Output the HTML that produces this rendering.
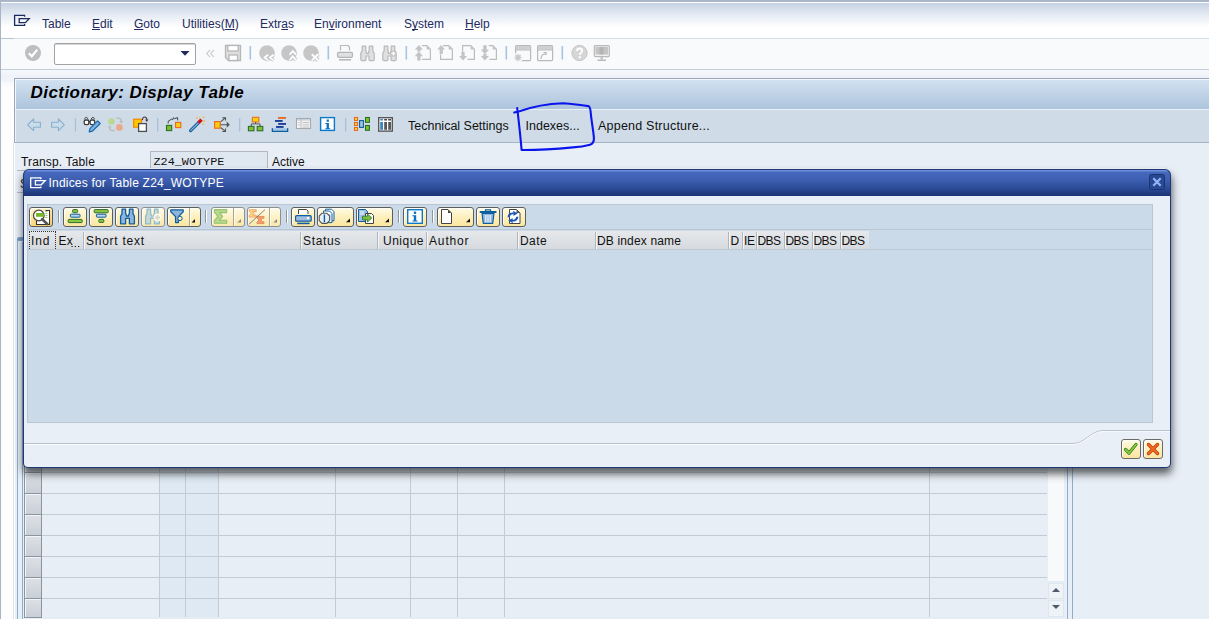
<!DOCTYPE html>
<html><head><meta charset="utf-8">
<style>
*{margin:0;padding:0;box-sizing:border-box}
html,body{width:1209px;height:619px;overflow:hidden;background:#fff;font-family:"Liberation Sans",sans-serif;font-size:12px;color:#000}
.a{position:absolute}
svg{position:absolute;overflow:visible}
u{text-decoration-skip-ink:none}
</style></head><body>
<!-- outer frame -->
<div class="a" style="left:0;top:0;width:1209px;height:619px;background:#ffffff"></div>
<div class="a" style="left:0;top:0;width:1px;height:619px;background:#a9b5c4"></div>
<div class="a" style="left:0;top:0;width:1209px;height:2px;background:#a9b6c8"></div>
<div class="a" style="left:1px;top:2px;width:1208px;height:1px;background:#ffffff"></div>
<!-- menu bar gradient -->
<div class="a" style="left:1px;top:3px;width:1208px;height:35px;background:linear-gradient(#c5d2e3,#e6ecf4 35%,#ffffff 70%,#ffffff)"></div>
<div class="a" style="left:1px;top:38px;width:1208px;height:1px;background:#d5dde7"></div><div class="a" style="left:1px;top:38px;width:13px;height:1px;background:#b4c2d2"></div>

<!-- menu -->
<svg style="left:0;top:0" width="40" height="40"><path d="M24.6 16.8V15.4H14.6V25.4H24.6V24" fill="none" stroke="#1b2a5e" stroke-width="1.3"/><path d="M19.2 18.6H29.2L25.4 22.6H19.2Z" fill="none" stroke="#1b2a5e" stroke-width="1.3"/></svg>
<div class="a" style="left:42px;top:16px;font-size:12px;color:#232a60;line-height:16px">Table</div>
<div class="a" style="left:92px;top:16px;font-size:12px;color:#232a60;line-height:16px"><u>E</u>dit</div>
<div class="a" style="left:134px;top:16px;font-size:12px;color:#232a60;line-height:16px"><u>G</u>oto</div>
<div class="a" style="left:182px;top:16px;font-size:12px;color:#232a60;line-height:16px">Utilities(<u>M</u>)</div>
<div class="a" style="left:260px;top:16px;font-size:12px;color:#232a60;line-height:16px">Extr<u>a</u>s</div>
<div class="a" style="left:314px;top:16px;font-size:12px;color:#232a60;line-height:16px">En<u>v</u>ironment</div>
<div class="a" style="left:404px;top:16px;font-size:12px;color:#232a60;line-height:16px">S<u>y</u>stem</div>
<div class="a" style="left:465px;top:16px;font-size:12px;color:#232a60;line-height:16px"><u>H</u>elp</div>
<!-- system toolbar -->
<div class="a" style="left:1px;top:39px;width:1208px;height:30px;background:#f8fafc"></div>
<div class="a" style="left:1px;top:69px;width:1208px;height:1px;background:#c5cfdb"></div>
<div class="a" style="left:54px;top:43px;width:142px;height:22px;background:#fff;border:1px solid #a2a2a2;border-radius:2px;box-shadow:inset 0 1px 0 #d8d8d8"></div>
<svg style="left:0;top:0" width="1209" height="70">
<g fill="#c4c4c4" stroke="none">
<circle cx="33" cy="53" r="8" fill="#bebebe"/>
</g>
<path d="M28.8 53.2L31.8 56.3L37.3 49.6" fill="none" stroke="#fff" stroke-width="2.2"/>
<path d="M180.5 51H189.5L185 55.8Z" fill="#1d2b5e"/>
<path d="M210 50L206.6 53.5L210 57M214 50L210.6 53.5L214 57" fill="none" stroke="#cdcdcd" stroke-width="1.1"/>
<path d="M225.5 45.5H240.5V60.5H228.5L225.5 57.5Z" fill="#dedede" stroke="#b7b7b7" stroke-width="1.3"/>
<rect x="227.8" y="45.5" width="10.4" height="5.5" fill="#fff" stroke="#b7b7b7" stroke-width="1.3"/>
<rect x="229" y="55" width="8.5" height="5.5" fill="#fff" stroke="#b7b7b7" stroke-width="1.3"/>
<rect x="249.5" y="46" width="1.6" height="13.5" fill="#a9c4e2"/>
<circle cx="267" cy="53" r="7.8" fill="#c6c6c6"/>
<path d="M268.2 54.8L264.6 57.6L268.2 60.4M273.6 54.8L270 57.6L273.6 60.4" fill="none" stroke="#c6c6c6" stroke-width="3.6" stroke-linejoin="miter"/>
<path d="M268.2 54.8L264.6 57.6L268.2 60.4M273.6 54.8L270 57.6L273.6 60.4" fill="none" stroke="#fff" stroke-width="1.8"/>
<circle cx="289" cy="53" r="7.8" fill="#c6c6c6"/>
<path d="M289.6 54.6L292.8 51L296 54.6M289.6 60L292.8 56.4L296 60" fill="none" stroke="#c6c6c6" stroke-width="3.6"/>
<path d="M289.6 54.6L292.8 51L296 54.6M289.6 60L292.8 56.4L296 60" fill="none" stroke="#fff" stroke-width="1.8"/>
<circle cx="311" cy="53" r="7.8" fill="#c6c6c6"/>
<path d="M311.8 54.2L318.2 60.4M318.2 54.2L311.8 60.4" fill="none" stroke="#c6c6c6" stroke-width="4"/>
<path d="M311.8 54.2L318.2 60.4M318.2 54.2L311.8 60.4" fill="none" stroke="#fff" stroke-width="2"/>
<rect x="327.5" y="46" width="1.6" height="13.5" fill="#a9c4e2"/>
<!-- print -->
<path d="M340.5 50.5V45.5H348L349.5 47V50.5" fill="none" stroke="#b9b9b9" stroke-width="1.2"/>
<rect x="337.6" y="52.3" width="14.8" height="5" rx="1" fill="#e0e0e0" stroke="#b5b5b5" stroke-width="1.3"/>
<rect x="339" y="59" width="12" height="1.6" fill="#b9b9b9"/>
<!-- binoculars -->
<path d="M360.8 59.6V53.2L362.2 50.6V46.2H365.8V50.4L366.4 52V53.4H368.6V52L369.2 50.4V46.2H372.8V50.6L374.2 53.2V59.6C374.2 60.2 373.8 60.6 373.2 60.6H370C369.4 60.6 369 60.2 369 59.6V56H366V59.6C366 60.2 365.6 60.6 365 60.6H361.8C361.2 60.6 360.8 60.2 360.8 59.6Z" fill="#e0e0e0" stroke="#b9b9b9" stroke-width="1.2" stroke-linejoin="round"/>
<path d="M382.8 59.6V53.2L384.2 50.6V46.2H387.8V50.4L388.4 52V53.4H390.6V52L391.2 50.4V46.2H394.8V50.6L396.2 53.2V59.6C396.2 60.2 395.8 60.6 395.2 60.6H392C391.4 60.6 391 60.2 391 59.6V56H388V59.6C388 60.2 387.6 60.6 387 60.6H383.8C383.2 60.6 382.8 60.2 382.8 59.6Z" fill="#e0e0e0" stroke="#b9b9b9" stroke-width="1.2" stroke-linejoin="round"/>
<path d="M393.4 50.6V56.4M390.5 53.5H396.3" stroke="#bdbdbd" stroke-width="3.6"/>
<path d="M393.4 51.4V55.6M391.3 53.5H395.5" stroke="#fff" stroke-width="1.6"/>
<rect x="405.5" y="46" width="1.6" height="13.5" fill="#a9c4e2"/>
<!-- page nav -->
<g fill="none" stroke="#bcbcbc" stroke-width="1.2">
<path d="M422 45.6H426.8L430.4 49.2V59.4H422"/>
<path d="M443 45.6H448.8L452.4 49.2V59.4H440.6V54.5"/>
<path d="M462.6 51.5V45.6H470.8L474.4 49.2V59.4H467.5"/>
<path d="M488.8 45.6H492.8L496.4 49.2V59.4H489.5"/>
</g>
<g fill="#c4c4c4">
<path d="M426.6 45.6L430.4 49.4H426.6Z"/><path d="M448.6 45.6L452.4 49.4H448.6Z"/><path d="M470.6 45.6L474.4 49.4H470.6Z"/><path d="M492.6 45.6L496.4 49.4H492.6Z"/>
<path d="M414.8 49.6L418.9 45L423 49.6H420.6V51.6H417.2V49.6Z"/>
<path d="M414.8 56.2L418.9 51.6L423 56.2H420.6V60.6H417.2V56.2Z"/>
<path d="M437.2 49.6L441.1 45L445 49.6H442.8V54H439.6V49.6Z"/>
<path d="M459.1 56L463 60.6L467 56H464.6V51.8H461.4V56Z"/>
<path d="M480.8 49.6L484.9 54.2L489 49.6H486.6V45.2H483.2V49.6Z"/>
<path d="M480.8 56L484.9 60.6L489 56H486.6V54H483.2V56Z"/>
</g>
<rect x="505.5" y="46" width="1.6" height="13.5" fill="#a9c4e2"/>
<!-- new session / shortcut -->
<rect x="515.6" y="45.6" width="15" height="15" rx="1" fill="none" stroke="#b9b9b9" stroke-width="1.2"/>
<rect x="516" y="46" width="14.4" height="3.6" fill="#d0d0d0"/>
<path d="M516 50H530.5" stroke="#b9b9b9" stroke-width="1"/>
<rect x="514" y="53.5" width="8" height="8" fill="#f8fafc"/>
<path d="M518 54V61M514.5 57.5H521.5M515.5 55L520.5 60M520.5 55L515.5 60" stroke="#c8c8c8" stroke-width="1.4"/>
<rect x="537.6" y="45.6" width="15" height="15" rx="1" fill="none" stroke="#b9b9b9" stroke-width="1.2"/>
<rect x="538" y="46" width="14.4" height="3.6" fill="#d0d0d0"/>
<path d="M538 50H552.5" stroke="#b9b9b9" stroke-width="1"/>
<path d="M541 59C541 55.5 542.5 54 545.5 54M543.5 52.5H546V55" fill="none" stroke="#b5b5b5" stroke-width="1.2"/>
<rect x="561.5" y="46" width="1.6" height="13.5" fill="#a9c4e2"/>
<circle cx="579.5" cy="53" r="7.6" fill="#d6d6d6" stroke="#c4c4c4" stroke-width="1"/>
<path d="M577 51C577 49.2 578.2 48.5 579.6 48.5C581.2 48.5 582.2 49.5 582.2 50.8C582.2 52.5 579.8 52.8 579.8 55" fill="none" stroke="#fff" stroke-width="1.8"/>
<rect x="578.8" y="56.2" width="2" height="2" fill="#fff"/>
<rect x="594.3" y="45.6" width="15" height="11" rx="1" fill="#f0f0f0" stroke="#b9b9b9" stroke-width="1.2"/>
<rect x="595.5" y="47" width="12.5" height="7.5" fill="#c4c4c4"/>
<rect x="599.5" y="47" width="4" height="7.5" fill="#b4b4b4"/>
<rect x="600.5" y="57" width="2.5" height="2.5" fill="#c4c4c4"/>
<rect x="597.5" y="59.5" width="8.5" height="1.5" fill="#b9b9b9"/>
</svg>

<div class="a" style="left:1px;top:70px;width:1208px;height:8px;background:linear-gradient(#f4f7fb,#eef2f8)"></div>

<!-- main panel -->
<div class="a" style="left:14px;top:78px;width:1195px;height:1px;background:#98a8bc"></div>
<div class="a" style="left:14px;top:78px;width:1px;height:65px;background:#98a8bc"></div><div class="a" style="left:13px;top:143px;width:1px;height:476px;background:#dce1e8"></div>
<div class="a" style="left:15px;top:79px;width:1194px;height:30px;border-top:1px solid #f4f8fc;border-left:1px solid #f4f8fc;background:linear-gradient(#d2e1f0,#adc4dd)"></div>
<div class="a" style="left:15px;top:109px;width:1194px;height:1px;background:#e8eff7"></div>
<div class="a" style="left:15px;top:110px;width:1194px;height:32px;border-left:1px solid #eef3f8;background:#cfdce8"></div>
<div class="a" style="left:15px;top:142px;width:1194px;height:1px;background:#a5b4c4"></div>
<div class="a" style="left:15px;top:143px;width:1194px;height:476px;background:#e8eef6"></div>
<div class="a" style="left:1px;top:82px;width:12px;height:537px;background:linear-gradient(#f6f8fb,#fdfdfe 6px)"></div><div class="a" style="left:1px;top:78px;width:13px;height:4px;background:#f0f3f8"></div>


<div class="a" style="left:30.5px;top:83px;font-size:17px;font-weight:bold;font-style:italic;letter-spacing:0.45px;line-height:20px;color:#000">Dictionary: Display Table</div>
<svg style="left:0;top:0" width="400" height="140">
<!-- back/forward -->
<path d="M27.6 124.8L33.6 119V122.3H40.4V127.3H33.6V130.6Z" fill="#c9dcea" stroke="#88b0cc" stroke-width="1.1" stroke-linejoin="round"/>
<path d="M64.4 124.8L58.4 119V122.3H51.6V127.3H58.4V130.6Z" fill="#c9dcea" stroke="#88b0cc" stroke-width="1.1" stroke-linejoin="round"/>
<rect x="74.8" y="118" width="1.3" height="13.5" fill="#a9c0d8"/>
<!-- glasses pencil -->
<rect x="84.2" y="120" width="4.6" height="4.6" rx="1.6" fill="#fff" stroke="#3a3a3a" stroke-width="1.3"/>
<rect x="90.1" y="120" width="4.6" height="4.6" rx="1.6" fill="#fff" stroke="#3a3a3a" stroke-width="1.3"/>
<path d="M88.8 121.6H90.1M84.2 119L86.3 117.2L88.3 119M91 119L92.9 117.2L94.8 119" fill="none" stroke="#3a3a3a" stroke-width="1"/>
<path d="M89.2 131.8L89.9 128.6L97.6 120.9L100.2 123.5L92.5 131.2Z" fill="#7fb0e0" stroke="#1a6aa8" stroke-width="1.2" stroke-linejoin="round"/>
<!-- circles -->
<circle cx="111.4" cy="121.5" r="3.3" fill="#b9d98e"/>
<circle cx="119.4" cy="127.4" r="3.4" fill="#eaa98a"/>
<path d="M116.2 118.3H118.3C120 118.3 121.2 119.5 121.2 121.3" fill="none" stroke="#bdbdbd" stroke-width="1.5"/>
<path d="M119.3 121.2L121.2 123.4L123.1 121.2Z" fill="#b5b5b5"/>
<path d="M114.8 130.5H112.6C110.9 130.5 109.7 129.3 109.7 127.5" fill="none" stroke="#bdbdbd" stroke-width="1.5"/>
<path d="M107.8 127.6L109.7 125.4L111.6 127.6Z" fill="#b5b5b5"/>
<!-- copy -->
<rect x="133.6" y="119.2" width="7.8" height="8" fill="#ffc400" stroke="#f28a00" stroke-width="1.2"/>
<rect x="138.6" y="123.6" width="7.8" height="7.8" fill="#fff" stroke="#4e4e4e" stroke-width="1.3"/>
<path d="M142.6 120.2C142.2 118.6 143.2 117 144.6 117C146 117 147 118.2 146.8 119.8" fill="none" stroke="#3c3c3c" stroke-width="1.1"/>
<path d="M145 119.6L146.8 122L148.4 119.6Z" fill="#3c3c3c"/>
<rect x="157" y="118" width="1.3" height="13.5" fill="#a9c0d8"/>
<!-- hierarchy -->
<rect x="166.5" y="125.4" width="5.2" height="5.2" fill="#7cba2c" stroke="#2e6e32" stroke-width="1.1"/>
<rect x="175.6" y="122.4" width="5.2" height="5.2" fill="#ffcc10" stroke="#e8681e" stroke-width="1.1"/>
<path d="M168.2 123.4V121.2L171.5 119.2L172.8 119.6L173.4 117.7L174.6 118.6L177.6 117.6V120.4" fill="none" stroke="#444" stroke-width="1"/>
<!-- wand -->
<path d="M190.6 130.6L198.6 122.6" stroke="#0b5f9a" stroke-width="3.2" stroke-linecap="round"/>
<path d="M190.8 130.4L198.4 122.8" stroke="#8fb8dc" stroke-width="1.2" stroke-linecap="round"/>
<path d="M198.4 122.8L201.6 119.6" stroke="#d0141e" stroke-width="3.4" stroke-linecap="butt"/>
<path d="M196 118H197.8M199.5 117.3V118.2M202.8 117.8L204.3 116.7M203.3 121.1H205M203 123.5V125" stroke="#f6b20c" stroke-width="1.1"/>
<!-- where used -->
<rect x="214.6" y="121.6" width="5.6" height="6.6" fill="#ffcc10" stroke="#e8701e" stroke-width="1.2"/>
<path d="M220.4 124.7H228.5M221 121.6L225.4 117.6M221 127.8L225.4 131.4M222.3 117.7H225.5V120.6M222.3 131.5H225.5V128.6" fill="none" stroke="#555" stroke-width="1.1"/>
<path d="M226.7 121.6L229.8 124.7L226.7 127.8Z" fill="#555"/>
<rect x="239" y="118" width="1.3" height="13.5" fill="#a9c0d8"/>
<!-- org chart -->
<rect x="252.4" y="117.3" width="6.4" height="4.6" fill="#ffd20a" stroke="#e8701e" stroke-width="1.1"/>
<path d="M255.6 122V123.7M251.3 126V123.9H260V126" fill="none" stroke="#555" stroke-width="1"/>
<rect x="248.4" y="126.4" width="5.6" height="4.4" fill="#80c030" stroke="#2e6e32" stroke-width="1.1"/>
<rect x="257.2" y="126.4" width="5.6" height="4.4" fill="#80c030" stroke="#2e6e32" stroke-width="1.1"/>
<!-- stack -->
<rect x="278" y="117" width="8" height="1.8" fill="#e8661e"/>
<rect x="275" y="120" width="7.6" height="1.9" fill="#1c3f9a"/>
<rect x="278.2" y="123" width="7.8" height="1.9" fill="#1c3f9a"/>
<rect x="276" y="126" width="7.6" height="1.9" fill="#1c3f9a"/>
<path d="M272.4 128.3V131.2H287.6V128.3" fill="none" stroke="#0d5e9c" stroke-width="1.4"/>
<rect x="273.1" y="128.3" width="13.8" height="2.1" fill="#9ec4e8"/>
<!-- table disabled -->
<rect x="296.5" y="118.5" width="14" height="10" fill="#f4f4f4" stroke="#a8a8a8" stroke-width="1.1"/>
<rect x="297" y="119" width="13" height="1.6" fill="#c4d4e4"/>
<path d="M301 119V128.5M298.3 122.5H299.8M298.3 124.8H299.8M302.6 122.5H309M302.6 124.8H309M302.6 127H309" stroke="#b8b8b8" stroke-width="0.9"/>
<!-- info -->
<rect x="320.6" y="117.6" width="13.8" height="12.8" fill="#fff" stroke="#0a7ac8" stroke-width="1.4"/>
<rect x="326.6" y="119.5" width="2.3" height="2.2" fill="#0a72c0"/>
<path d="M325.3 123H328.9V128.2H330.2V129.2H325.3V128.2H326.6V124H325.3Z" fill="#0a72c0"/>
<rect x="345" y="118" width="1.3" height="13.5" fill="#a9c0d8"/>
<!-- org blocks -->
<g fill="#ffe53a" stroke="#e8661e" stroke-width="1.1">
<rect x="354.5" y="117.5" width="3" height="2.9"/><rect x="354.5" y="122.5" width="3" height="2.9"/><rect x="354.5" y="127.5" width="3" height="2.9"/>
</g>
<rect x="359.6" y="120.6" width="3.8" height="6.8" fill="#a9c4e4" stroke="#0c5e9a" stroke-width="1.1"/>
<rect x="365.5" y="117.5" width="3.9" height="4.8" fill="#80c424" stroke="#2c6e30" stroke-width="1.1"/>
<rect x="365.5" y="125.5" width="3.9" height="4.8" fill="#80c424" stroke="#2c6e30" stroke-width="1.1"/>
<!-- columns -->
<rect x="378.7" y="117.7" width="13.6" height="13.4" fill="#fff" stroke="#575757" stroke-width="1.4"/>
<rect x="380.2" y="119" width="2.8" height="1.5" fill="#3c86bc"/><rect x="384.2" y="119" width="2.8" height="1.5" fill="#444"/><rect x="388.2" y="119" width="2.8" height="1.5" fill="#444"/>
<rect x="380.2" y="122" width="2.8" height="7.8" fill="#3c86bc"/><rect x="384.2" y="122" width="2.8" height="7.8" fill="#585858"/><rect x="388.2" y="122" width="2.8" height="7.8" fill="#585858"/>
</svg>
<div class="a" style="left:408px;top:118px;font-size:12.5px;line-height:16px;color:#111">Technical Settings</div>
<div class="a" style="left:525.5px;top:118px;font-size:12.5px;line-height:16px;color:#111">Indexes...</div>
<div class="a" style="left:598px;top:118px;letter-spacing:0.22px;font-size:12.5px;line-height:16px;color:#111">Append Structure...</div>

<!-- main content behind modal -->
<div class="a" style="left:21px;top:154px;letter-spacing:0.15px;font-size:12px;line-height:16px;color:#111">Transp. Table</div>
<div class="a" style="left:150px;top:151px;width:118px;height:22px;background:#dfe8f1;border:1px solid #b4b9c0;border-bottom:none"></div>
<div class="a" style="left:153.5px;top:153.5px;font-family:'Liberation Mono',monospace;font-size:11.8px;line-height:16px;color:#111">Z24_WOTYPE</div>
<div class="a" style="left:272px;top:154px;font-size:12px;line-height:16px;color:#111">Active</div>
<div class="a" style="left:17px;top:170px;width:8px;height:1px;background:#b5b9be"></div>
<div class="a" style="left:17px;top:192px;width:8px;height:1px;background:#b5b9be"></div>
<div class="a" style="left:20px;top:176px;font-size:12px;line-height:16px;color:#111">S</div>
<!-- table container -->
<div class="a" style="left:17px;top:237px;width:1056px;height:382px;border:1px solid #8fadca;border-bottom:none;border-radius:3px 3px 0 0;background:#e6eef7"></div>
<div class="a" style="left:22px;top:242px;width:1046px;height:377px;border-left:1px solid #8fadca;border-right:1px solid #8fadca;background:#e9eff6"></div>
<div class="a" style="left:17px;top:237px;width:1056px;height:4px;border-radius:3px 3px 0 0;background:linear-gradient(#7fa3cb,#6f96c3 60%,#86a9cf)"></div>
<!-- grid -->
<div class="a" style="left:24px;top:440px;width:1023px;height:177px;background:#e8eef5"></div>
<div class="a" style="left:160px;top:440px;width:58px;height:177px;background:#dee9f3"></div>
<div class="a" style="left:159px;top:440px;width:1px;height:177px;background:#c3cbd5"></div>
<div class="a" style="left:185px;top:440px;width:1px;height:177px;background:#c3cbd5"></div>
<div class="a" style="left:218px;top:440px;width:1px;height:177px;background:#c3cbd5"></div>
<div class="a" style="left:335px;top:440px;width:1px;height:177px;background:#c3cbd5"></div>
<div class="a" style="left:410px;top:440px;width:1px;height:177px;background:#c3cbd5"></div>
<div class="a" style="left:457px;top:440px;width:1px;height:177px;background:#c3cbd5"></div>
<div class="a" style="left:504px;top:440px;width:1px;height:177px;background:#c3cbd5"></div>
<div class="a" style="left:929px;top:440px;width:1px;height:177px;background:#c3cbd5"></div>
<div class="a" style="left:42px;top:451px;width:1005px;height:1px;background:#c3cbd5"></div>
<div class="a" style="left:42px;top:472px;width:1005px;height:1px;background:#c3cbd5"></div>
<div class="a" style="left:42px;top:493px;width:1005px;height:1px;background:#c3cbd5"></div>
<div class="a" style="left:42px;top:514px;width:1005px;height:1px;background:#c3cbd5"></div>
<div class="a" style="left:42px;top:535px;width:1005px;height:1px;background:#c3cbd5"></div>
<div class="a" style="left:42px;top:556px;width:1005px;height:1px;background:#c3cbd5"></div>
<div class="a" style="left:42px;top:577px;width:1005px;height:1px;background:#c3cbd5"></div>
<div class="a" style="left:42px;top:598px;width:1005px;height:1px;background:#c3cbd5"></div>
<div class="a" style="left:24px;top:409px;width:18px;height:22px;border:1px solid #8b95a1;background:linear-gradient(#dde1e6,#c9cfd7);box-shadow:inset 1px 1px 0 #f2f4f6"></div>
<div class="a" style="left:24px;top:430px;width:18px;height:22px;border:1px solid #8b95a1;background:linear-gradient(#dde1e6,#c9cfd7);box-shadow:inset 1px 1px 0 #f2f4f6"></div>
<div class="a" style="left:24px;top:451px;width:18px;height:22px;border:1px solid #8b95a1;background:linear-gradient(#dde1e6,#c9cfd7);box-shadow:inset 1px 1px 0 #f2f4f6"></div>
<div class="a" style="left:24px;top:472px;width:18px;height:22px;border:1px solid #8b95a1;background:linear-gradient(#dde1e6,#c9cfd7);box-shadow:inset 1px 1px 0 #f2f4f6"></div>
<div class="a" style="left:24px;top:493px;width:18px;height:22px;border:1px solid #8b95a1;background:linear-gradient(#dde1e6,#c9cfd7);box-shadow:inset 1px 1px 0 #f2f4f6"></div>
<div class="a" style="left:24px;top:514px;width:18px;height:22px;border:1px solid #8b95a1;background:linear-gradient(#dde1e6,#c9cfd7);box-shadow:inset 1px 1px 0 #f2f4f6"></div>
<div class="a" style="left:24px;top:535px;width:18px;height:22px;border:1px solid #8b95a1;background:linear-gradient(#dde1e6,#c9cfd7);box-shadow:inset 1px 1px 0 #f2f4f6"></div>
<div class="a" style="left:24px;top:556px;width:18px;height:22px;border:1px solid #8b95a1;background:linear-gradient(#dde1e6,#c9cfd7);box-shadow:inset 1px 1px 0 #f2f4f6"></div>
<div class="a" style="left:24px;top:577px;width:18px;height:22px;border:1px solid #8b95a1;background:linear-gradient(#dde1e6,#c9cfd7);box-shadow:inset 1px 1px 0 #f2f4f6"></div>
<div class="a" style="left:24px;top:598px;width:18px;height:20px;border:1px solid #8b95a1;background:linear-gradient(#dde1e6,#c9cfd7);box-shadow:inset 1px 1px 0 #f2f4f6"></div>
<div class="a" style="left:42px;top:617px;width:1005px;height:2px;background:#e4ebf2"></div>
<div class="a" style="left:1047px;top:440px;width:18px;height:179px;background:#e6edf5"></div>
<div class="a" style="left:1048px;top:440px;width:16px;height:141px;background:#f7f9fb"></div>
<div class="a" style="left:1048px;top:583px;width:16px;height:16px;background:#eef3f8;border:1px solid #dfe6ee"></div>
<div class="a" style="left:1048px;top:600px;width:16px;height:17px;background:#eef3f8;border:1px solid #dfe6ee"></div>
<svg style="left:0;top:0" width="1100" height="619"><path d="M1052 592H1060L1056 588Z" fill="#4c5a6a"/><path d="M1052 605H1060L1056 609Z" fill="#4c5a6a"/></svg>

<!-- modal -->
<div class="a" style="left:29px;top:168px;width:1136px;height:1px;background:#f6f9fc"></div>
<div class="a" style="left:23px;top:169px;width:1148px;height:299px;border-radius:6px 6px 5px 5px;box-shadow:1px 6px 8px 0px rgba(35,38,42,0.62),-1px 4px 6px 0px rgba(35,38,42,0.25);background:#1e3875"></div>
<div class="a" style="left:24px;top:170px;width:1146px;height:26px;border-radius:5px 5px 0 0;background:linear-gradient(#6e8edc,#6e8edc 1px,#4668bd 2px,#3f60b2 35%,#2c4c98 70%,#1a3374)"></div>
<div class="a" style="left:24px;top:196px;width:1146px;height:271px;border-radius:0 0 4px 4px;background:#e9eff6"></div>
<svg style="left:0;top:0" width="1209" height="619">
<path d="M40.8 179.2V177.9H30.7V187.7H40.8V186.4" fill="none" stroke="#fff" stroke-width="1.3"/>
<path d="M35.4 180.6H45.2L41.2 184.8H35.4Z" fill="none" stroke="#fff" stroke-width="1.3"/>
<rect x="1149.5" y="174.5" width="15" height="15" rx="2" fill="#2a4891" stroke="#1a3372" stroke-width="1"/>
<path d="M1153.3 178.3L1160.7 185.7M1160.7 178.3L1153.3 185.7" stroke="#94b4f8" stroke-width="2.2"/>
</svg>
<div class="a" style="left:48.5px;top:175px;font-size:12px;letter-spacing:0.2px;line-height:16px;color:#fff">Indices for Table Z24_WOTYPE</div>
<!-- modal content area -->
<div class="a" style="left:27px;top:204px;width:1126px;height:219px;background:#cbdae8;border:1px solid #bcc6d2"></div>
<div class="a" style="left:28px;top:229px;width:1124px;height:1px;background:#bcc6d2"></div>
<!-- modal toolbar -->
<div class="a" style="left:29px;top:207px;width:24px;height:20px;border:1px solid #5a5a5a;border-radius:3px;background:linear-gradient(165deg,#fff8dc 0%,#fde49a 40%,#f9cf62 100%);box-shadow:inset 1px 1px 0 rgba(255,255,255,0.8)"></div>
<div class="a" style="left:63px;top:207px;width:24px;height:20px;border:1px solid #5e5e5e;border-radius:3px;background:linear-gradient(#fffbe4,#fdf0bc 50%,#fbe6a0);box-shadow:inset 1px 1px 0 rgba(255,255,255,0.8)"></div>
<div class="a" style="left:89px;top:207px;width:24px;height:20px;border:1px solid #5e5e5e;border-radius:3px;background:linear-gradient(#fffbe4,#fdf0bc 50%,#fbe6a0);box-shadow:inset 1px 1px 0 rgba(255,255,255,0.8)"></div>
<div class="a" style="left:115px;top:207px;width:24px;height:20px;border:1px solid #5e5e5e;border-radius:3px;background:linear-gradient(#fffbe4,#fdf0bc 50%,#fbe6a0);box-shadow:inset 1px 1px 0 rgba(255,255,255,0.8)"></div>
<div class="a" style="left:141px;top:207px;width:24px;height:20px;border:1px solid #8f8f8f;border-radius:3px;background:linear-gradient(#fffbe8,#fcefc0 60%,#fae8ac);box-shadow:inset 1px 1px 0 rgba(255,255,255,0.8)"></div>
<div class="a" style="left:167px;top:207px;width:34px;height:20px;border:1px solid #5e5e5e;border-radius:3px;background:linear-gradient(#fffbe4,#fdf0bc 50%,#fbe6a0);box-shadow:inset 1px 1px 0 rgba(255,255,255,0.8)"></div>
<div class="a" style="left:189px;top:208px;width:1px;height:18px;background:#a8a59a"></div><div class="a" style="left:190px;top:208px;width:1px;height:18px;background:#fffbe8"></div>
<div class="a" style="left:211px;top:207px;width:34px;height:20px;border:1px solid #8f8f8f;border-radius:3px;background:linear-gradient(#fffbe8,#fcefc0 60%,#fae8ac);box-shadow:inset 1px 1px 0 rgba(255,255,255,0.8)"></div>
<div class="a" style="left:233px;top:208px;width:1px;height:18px;background:#a8a59a"></div><div class="a" style="left:234px;top:208px;width:1px;height:18px;background:#fffbe8"></div>
<div class="a" style="left:247px;top:207px;width:34px;height:20px;border:1px solid #8f8f8f;border-radius:3px;background:linear-gradient(#fffbe8,#fcefc0 60%,#fae8ac);box-shadow:inset 1px 1px 0 rgba(255,255,255,0.8)"></div>
<div class="a" style="left:269px;top:208px;width:1px;height:18px;background:#a8a59a"></div><div class="a" style="left:270px;top:208px;width:1px;height:18px;background:#fffbe8"></div>
<div class="a" style="left:291px;top:207px;width:24px;height:20px;border:1px solid #5e5e5e;border-radius:3px;background:linear-gradient(#fffbe4,#fdf0bc 50%,#fbe6a0);box-shadow:inset 1px 1px 0 rgba(255,255,255,0.8)"></div>
<div class="a" style="left:317px;top:207px;width:37px;height:20px;border:1px solid #5e5e5e;border-radius:3px;background:linear-gradient(#fffbe4,#fdf0bc 50%,#fbe6a0);box-shadow:inset 1px 1px 0 rgba(255,255,255,0.8)"></div>
<div class="a" style="left:356px;top:207px;width:37px;height:20px;border:1px solid #5e5e5e;border-radius:3px;background:linear-gradient(#fffbe4,#fdf0bc 50%,#fbe6a0);box-shadow:inset 1px 1px 0 rgba(255,255,255,0.8)"></div>
<div class="a" style="left:403px;top:207px;width:24px;height:20px;border:1px solid #5e5e5e;border-radius:3px;background:linear-gradient(#fffbe4,#fdf0bc 50%,#fbe6a0);box-shadow:inset 1px 1px 0 rgba(255,255,255,0.8)"></div>
<div class="a" style="left:437px;top:207px;width:37px;height:20px;border:1px solid #5e5e5e;border-radius:3px;background:linear-gradient(#fffbe4,#fdf0bc 50%,#fbe6a0);box-shadow:inset 1px 1px 0 rgba(255,255,255,0.8)"></div>
<div class="a" style="left:476px;top:207px;width:24px;height:20px;border:1px solid #5e5e5e;border-radius:3px;background:linear-gradient(#fffbe4,#fdf0bc 50%,#fbe6a0);box-shadow:inset 1px 1px 0 rgba(255,255,255,0.8)"></div>
<div class="a" style="left:502px;top:207px;width:24px;height:20px;border:1px solid #5e5e5e;border-radius:3px;background:linear-gradient(#fffbe4,#fdf0bc 50%,#fbe6a0);box-shadow:inset 1px 1px 0 rgba(255,255,255,0.8)"></div>
<div class="a" style="left:58px;top:210px;width:1px;height:13px;background:#8e949a"></div><div class="a" style="left:59px;top:210px;width:1px;height:13px;background:#fff"></div>
<div class="a" style="left:205px;top:210px;width:1px;height:13px;background:#8e949a"></div><div class="a" style="left:206px;top:210px;width:1px;height:13px;background:#fff"></div>
<div class="a" style="left:286px;top:210px;width:1px;height:13px;background:#8e949a"></div><div class="a" style="left:287px;top:210px;width:1px;height:13px;background:#fff"></div>
<div class="a" style="left:398px;top:210px;width:1px;height:13px;background:#8e949a"></div><div class="a" style="left:399px;top:210px;width:1px;height:13px;background:#fff"></div>
<div class="a" style="left:432px;top:210px;width:1px;height:13px;background:#8e949a"></div><div class="a" style="left:433px;top:210px;width:1px;height:13px;background:#fff"></div>

<svg style="left:0;top:0" width="600" height="240">
<!-- 1 search -->
<path d="M45.5 210.5H49.5V224.5H36.5V220.5" fill="#fff" stroke="#333" stroke-width="1.1"/>
<rect x="41" y="211" width="8" height="11" fill="#fff"/>
<circle cx="38.8" cy="215.5" r="5.3" fill="#fff" stroke="#444" stroke-width="1.2"/>
<rect x="36" y="213" width="7.6" height="3.8" fill="#76b82a"/>
<path d="M45.4 211.5H47.4M45.4 213.5H47.4M45.4 215.5H47.4M45.4 217.5H47.4" stroke="#80c040" stroke-width="0.9"/>
<path d="M42.2 219.2L47.2 224" stroke="#555" stroke-width="2.6" stroke-linecap="round"/>
<!-- 2 sort asc -->
<rect x="72.6" y="209.6" width="5" height="3" rx="0.8" fill="#8cc83c" stroke="#2e6e32" stroke-width="1"/>
<rect x="70.4" y="214.2" width="9.6" height="3" rx="0.8" fill="#bcd4ee" stroke="#0a5d9c" stroke-width="1"/>
<rect x="68.2" y="219.4" width="14" height="3.2" rx="0.8" fill="#8cc83c" stroke="#2e6e32" stroke-width="1"/>
<!-- 3 sort desc -->
<rect x="94.2" y="209.6" width="14" height="3.2" rx="0.8" fill="#8cc83c" stroke="#2e6e32" stroke-width="1"/>
<rect x="96.4" y="214.2" width="9.6" height="3" rx="0.8" fill="#bcd4ee" stroke="#0a5d9c" stroke-width="1"/>
<rect x="98.8" y="219.4" width="5" height="3" rx="0.8" fill="#8cc83c" stroke="#2e6e32" stroke-width="1"/>
<!-- 4 binoculars -->
<path d="M120.6 223.8V216.3L122 213.6V209.2H125.6V213.4L126.4 215V216H128.6V215L129.4 213.4V209.2H133V213.6L134.4 216.3V223.8H129.4V218.3H125.6V223.8Z" fill="#8fb5de" stroke="#0e5f9e" stroke-width="1.3" stroke-linejoin="round"/>
<!-- 5 binoculars+ disabled -->
<path d="M145.6 223.8V216.3L147 213.6V209.2H150.6V213.4L151.4 215V216H153.6V215L154.4 213.4V209.2H158V213.6L159.4 216.3V223.8H154.4V218.3H150.6V223.8Z" fill="#c8d8d8" stroke="#8cbcc8" stroke-width="1.2" stroke-linejoin="round"/>
<circle cx="157.5" cy="217.5" r="3.9" fill="#fffbe8"/>
<path d="M157.5 214.8V220.2M154.8 217.5H160.2" stroke="#d8d8d0" stroke-width="1.8"/>
<!-- 6 filter -->
<path d="M170.8 209.8H183.2V211.8L178.4 216.6V222.6H175.6V216.6L170.8 211.8Z" fill="#8fb5de" stroke="#0e5f9e" stroke-width="1.3" stroke-linejoin="round"/>
<circle cx="180" cy="218.4" r="2.2" fill="#fdf0bc" stroke="#0e5f9e" stroke-width="1"/>
<path d="M191.5 222.5H195V219Z" fill="#111"/>
<!-- 7 sigma disabled -->
<path d="M214.4 209.6H226.7V212.6H219.6L222.6 216.4L219.6 220.2H226.7V223.2H214.4V220.6L218 216.4L214.4 212.2Z" fill="#b8d890" stroke="#94c46a" stroke-width="1.1" stroke-linejoin="round"/>
<path d="M237.4 222.5H241V219Z" fill="#888"/>
<!-- 8 split sigma disabled -->
<path d="M249.2 209.8H256.2V211.6H252.4L254 213.4L252.4 215.2H256.2V217H249.2V215.6L251.2 213.4L249.2 211.2Z" fill="#ffe080" stroke="#f0a070" stroke-width="1"/>
<path d="M257 216.4H264V218.2H260.2L261.8 220L260.2 221.8H264V223.6H257V222.2L259 220L257 217.8Z" fill="#f0a070" stroke="#e89060" stroke-width="1"/>
<path d="M249 224.2L265 209.6" stroke="#555" stroke-width="0.7"/>
<path d="M273.4 222.5H277V219Z" fill="#888"/>
<!-- 9 print -->
<path d="M298.5 214V209.5H306.5L308 211V214" fill="#fff" stroke="#444" stroke-width="1"/>
<rect x="295.6" y="215.6" width="15.6" height="5.6" rx="1" fill="#a0bde2" stroke="#0e5f9e" stroke-width="1.2"/>
<rect x="307" y="217" width="2" height="2" fill="#fff"/>
<rect x="297.2" y="222.6" width="12.4" height="1.6" fill="#0e5f9e"/>
<!-- 10 views -->
<path d="M325.5 210.5V209.2H331.5L334 211.7V220.8H325.5Z" fill="#fff" stroke="#0e5f9e" stroke-width="1"/>
<path d="M323.5 212.5V211H329.5L332 213.5V222.6H323.5Z" fill="#fff" stroke="#0e5f9e" stroke-width="1"/>
<path d="M327 215H330.5M327 217H330.5M327 219H330.5" stroke="#5a8cc0" stroke-width="0.8"/>
<path d="M322 213.2H326.8L329.6 216V220.6L326.8 223.4H322L319.2 220.6V216Z" fill="#e8f0f8" stroke="#555" stroke-width="1.1"/>
<path d="M324.4 214.5V222.2" stroke="#0e5f9e" stroke-width="1.4"/>
<path d="M346 222.3H350V218.5Z" fill="#111"/>
<!-- 11 export -->
<path d="M358.5 209.5H365.5L367.5 211.5V221.5H358.5Z" fill="#a0bde2" stroke="#0e5f9e" stroke-width="1"/>
<path d="M360 212H364M360 214H364" stroke="#fff" stroke-width="0.9"/>
<path d="M365.5 213.5H371.5L373.5 215.5V223.5H365.5Z" fill="#fff" stroke="#444" stroke-width="1"/>
<path d="M362.5 216.2H367.5V214L371.8 218L367.5 222V219.8H362.5Z" fill="#7cc03a" stroke="#2e7a32" stroke-width="0.9"/>
<path d="M385 222.3H389V218.5Z" fill="#111"/>
<!-- 12 info -->
<rect x="407.7" y="209.7" width="14.6" height="13.6" fill="#fff" stroke="#0a7ac8" stroke-width="1.4"/>
<rect x="413.8" y="211.6" width="2.4" height="2.3" fill="#0a72c0"/>
<path d="M412.4 215.2H416.2V220.6H417.6V221.6H412.4V220.6H413.8V216.2H412.4Z" fill="#0a72c0"/>
<!-- 13 new doc -->
<path d="M441.5 209.5H448L451.5 213V223.5H441.5Z" fill="#fff" stroke="#444" stroke-width="1"/>
<path d="M448 209.8L451.2 213H448Z" fill="#444"/>
<path d="M466 222.3H470V218.5Z" fill="#111"/>
<!-- 14 trash -->
<path d="M480.6 212H495.6" stroke="#0e5f9e" stroke-width="2.2" stroke-linecap="round"/>
<path d="M485.5 211V209.8H490.5V211" fill="none" stroke="#0e5f9e" stroke-width="1.2"/>
<path d="M482 213.5L483.3 223.5H492.7L494 213.5Z" fill="#8fb5de" stroke="#0e5f9e" stroke-width="1.2" stroke-linejoin="round"/>
<path d="M485.8 215V222M488 215V222M490.2 215V222" stroke="#fff" stroke-width="1"/>
<!-- 15 refresh -->
<path d="M509.5 209.5H516.5L520 213V223.5H509.5Z" fill="#fff" stroke="#444" stroke-width="1"/>
<path d="M516.5 209.8L519.8 213H516.5Z" fill="#555"/>
<path d="M507.6 217.2C507.8 213.8 510.6 212 513.6 212.6L513 210.8L517.8 213.4L513.2 216L513.6 214.4C511.6 214 510 215.2 509.8 217.2Z" fill="#1e58b8"/>
<path d="M518.4 216.8C518.2 220.2 515.4 222 512.4 221.4L513 223.2L508.2 220.6L512.8 218L512.4 219.6C514.4 220 516 218.8 516.2 216.8Z" fill="#1e58b8"/>
</svg>

<!-- header row -->
<div class="a" style="left:28px;top:231px;width:841px;height:18px;background:linear-gradient(#e6e8eb,#d6dade)"></div>
<div class="a" style="left:28px;top:249px;width:1124px;height:1px;background:#bcc8d4"></div>
<div class="a" style="left:83px;top:232px;width:1px;height:17px;background:#aeb6c0"></div><div class="a" style="left:84px;top:232px;width:1px;height:17px;background:#f4f5f7"></div>
<div class="a" style="left:300px;top:232px;width:1px;height:17px;background:#aeb6c0"></div><div class="a" style="left:301px;top:232px;width:1px;height:17px;background:#f4f5f7"></div>
<div class="a" style="left:377px;top:232px;width:1px;height:17px;background:#aeb6c0"></div><div class="a" style="left:378px;top:232px;width:1px;height:17px;background:#f4f5f7"></div>
<div class="a" style="left:426px;top:232px;width:1px;height:17px;background:#aeb6c0"></div><div class="a" style="left:427px;top:232px;width:1px;height:17px;background:#f4f5f7"></div>
<div class="a" style="left:517px;top:232px;width:1px;height:17px;background:#aeb6c0"></div><div class="a" style="left:518px;top:232px;width:1px;height:17px;background:#f4f5f7"></div>
<div class="a" style="left:595px;top:232px;width:1px;height:17px;background:#aeb6c0"></div><div class="a" style="left:596px;top:232px;width:1px;height:17px;background:#f4f5f7"></div>
<div class="a" style="left:728px;top:232px;width:1px;height:17px;background:#aeb6c0"></div><div class="a" style="left:729px;top:232px;width:1px;height:17px;background:#f4f5f7"></div>
<div class="a" style="left:742px;top:232px;width:1px;height:17px;background:#aeb6c0"></div><div class="a" style="left:743px;top:232px;width:1px;height:17px;background:#f4f5f7"></div>
<div class="a" style="left:756px;top:232px;width:1px;height:17px;background:#aeb6c0"></div><div class="a" style="left:757px;top:232px;width:1px;height:17px;background:#f4f5f7"></div>
<div class="a" style="left:784px;top:232px;width:1px;height:17px;background:#aeb6c0"></div><div class="a" style="left:785px;top:232px;width:1px;height:17px;background:#f4f5f7"></div>
<div class="a" style="left:812px;top:232px;width:1px;height:17px;background:#aeb6c0"></div><div class="a" style="left:813px;top:232px;width:1px;height:17px;background:#f4f5f7"></div>
<div class="a" style="left:840px;top:232px;width:1px;height:17px;background:#aeb6c0"></div><div class="a" style="left:841px;top:232px;width:1px;height:17px;background:#f4f5f7"></div>
<div class="a" style="left:29px;top:231px;width:27px;height:18px;border:1px dotted #333;border-bottom:none"></div>
<div class="a" style="left:31px;top:235px;font-size:12px;line-height:12px;letter-spacing:0.9px;color:#111;white-space:nowrap">Ind</div>
<div class="a" style="left:58.5px;top:235px;font-size:12px;line-height:12px;letter-spacing:0.3px;color:#111;white-space:nowrap">Ex</div>
<div class="a" style="left:86px;top:235px;font-size:12px;line-height:12px;letter-spacing:0.75px;color:#111;white-space:nowrap">Short text</div>
<div class="a" style="left:303px;top:235px;font-size:12px;line-height:12px;letter-spacing:0.65px;color:#111;white-space:nowrap">Status</div>
<div class="a" style="left:429px;top:235px;font-size:12px;line-height:12px;letter-spacing:0.85px;color:#111;white-space:nowrap">Author</div>
<div class="a" style="left:520px;top:235px;font-size:12px;line-height:12px;letter-spacing:0.45px;color:#111;white-space:nowrap">Date</div>
<div class="a" style="left:597px;top:235px;font-size:12px;line-height:12px;letter-spacing:0.15px;color:#111;white-space:nowrap">DB index name</div>
<div class="a" style="left:730.5px;top:235px;font-size:12px;line-height:12px;letter-spacing:0px;color:#111;white-space:nowrap">D</div>
<div class="a" style="left:744px;top:235px;font-size:12px;line-height:12px;letter-spacing:-0.3px;color:#111;white-space:nowrap">IE</div>
<div class="a" style="left:757.5px;top:235px;font-size:12px;line-height:12px;letter-spacing:-0.6px;color:#111;white-space:nowrap">DBS</div>
<div class="a" style="left:785.5px;top:235px;font-size:12px;line-height:12px;letter-spacing:-0.6px;color:#111;white-space:nowrap">DBS</div>
<div class="a" style="left:813.5px;top:235px;font-size:12px;line-height:12px;letter-spacing:-0.6px;color:#111;white-space:nowrap">DBS</div>
<div class="a" style="left:841.5px;top:235px;font-size:12px;line-height:12px;letter-spacing:-0.6px;color:#111;white-space:nowrap">DBS</div>
<div class="a" style="left:378px;top:235px;width:46px;text-align:right;font-size:12px;line-height:12px;letter-spacing:0.5px;color:#111;white-space:nowrap">Unique</div>
<svg style="left:0;top:0" width="100" height="260"><path d="M71.5 246.5h1.2M74.8 246.5h1.2M78 246.5h1.2" stroke="#111" stroke-width="1.2"/></svg>

<!-- modal bottom -->
<svg style="left:0;top:0" width="1209" height="619">
<path d="M24 443.5H1073C1085 443.5 1090 431 1103 430.5H1170" fill="none" stroke="#b6c2cf" stroke-width="1"/>
<path d="M24 444.5H1073C1085 444.5 1090 432 1103 431.5H1170" fill="none" stroke="#ffffff" stroke-width="1" opacity="0.7"/>
</svg>
<div class="a" style="left:1121px;top:439px;width:20px;height:20px;border:1px solid #6a6a6a;border-radius:3px;background:linear-gradient(#fffbe4,#fdf0bc 50%,#fbe4a0);box-shadow:inset 1px 1px 0 rgba(255,255,255,0.8)"></div>
<div class="a" style="left:1143px;top:439px;width:20px;height:20px;border:1px solid #6a6a6a;border-radius:3px;background:linear-gradient(#fffbe4,#fdf0bc 50%,#fbe4a0);box-shadow:inset 1px 1px 0 rgba(255,255,255,0.8)"></div>
<svg style="left:0;top:0" width="1209" height="619">
<path d="M1125.5 449.5L1129 453L1136 444.5" fill="none" stroke="#2f7a1e" stroke-width="3.2" stroke-linecap="round" stroke-linejoin="round"/>
<path d="M1125.5 449.5L1129 453L1136 444.5" fill="none" stroke="#8ccc3c" stroke-width="1.8" stroke-linecap="round" stroke-linejoin="round"/>
<path d="M1148.5 444.5L1157.5 453.5M1157.5 444.5L1148.5 453.5" stroke="#b83a10" stroke-width="3.4" stroke-linecap="round"/>
<path d="M1148.5 444.5L1157.5 453.5M1157.5 444.5L1148.5 453.5" stroke="#f06a1e" stroke-width="2" stroke-linecap="round"/>
</svg>
<!-- hand drawn loop -->
<svg style="left:0;top:0" width="1209" height="619">
<path d="M514.2 112.6L519.5 111.2C530 107.5 545 103.8 563 103.2C572 103.3 580 105.4 588.3 106.1C590.2 106.6 590.6 109 590.9 114.4C591.6 122 593.6 132 593.9 138C594.1 142 592.6 144 590 144.7C585 146 578 147 572.8 147.4C560 148.6 540 150.1 521.6 150C520.6 138 518.6 120 517.2 108" fill="none" stroke="#0a14ec" stroke-width="2.1" stroke-linecap="round" stroke-linejoin="round"/>
</svg>
</body></html>
